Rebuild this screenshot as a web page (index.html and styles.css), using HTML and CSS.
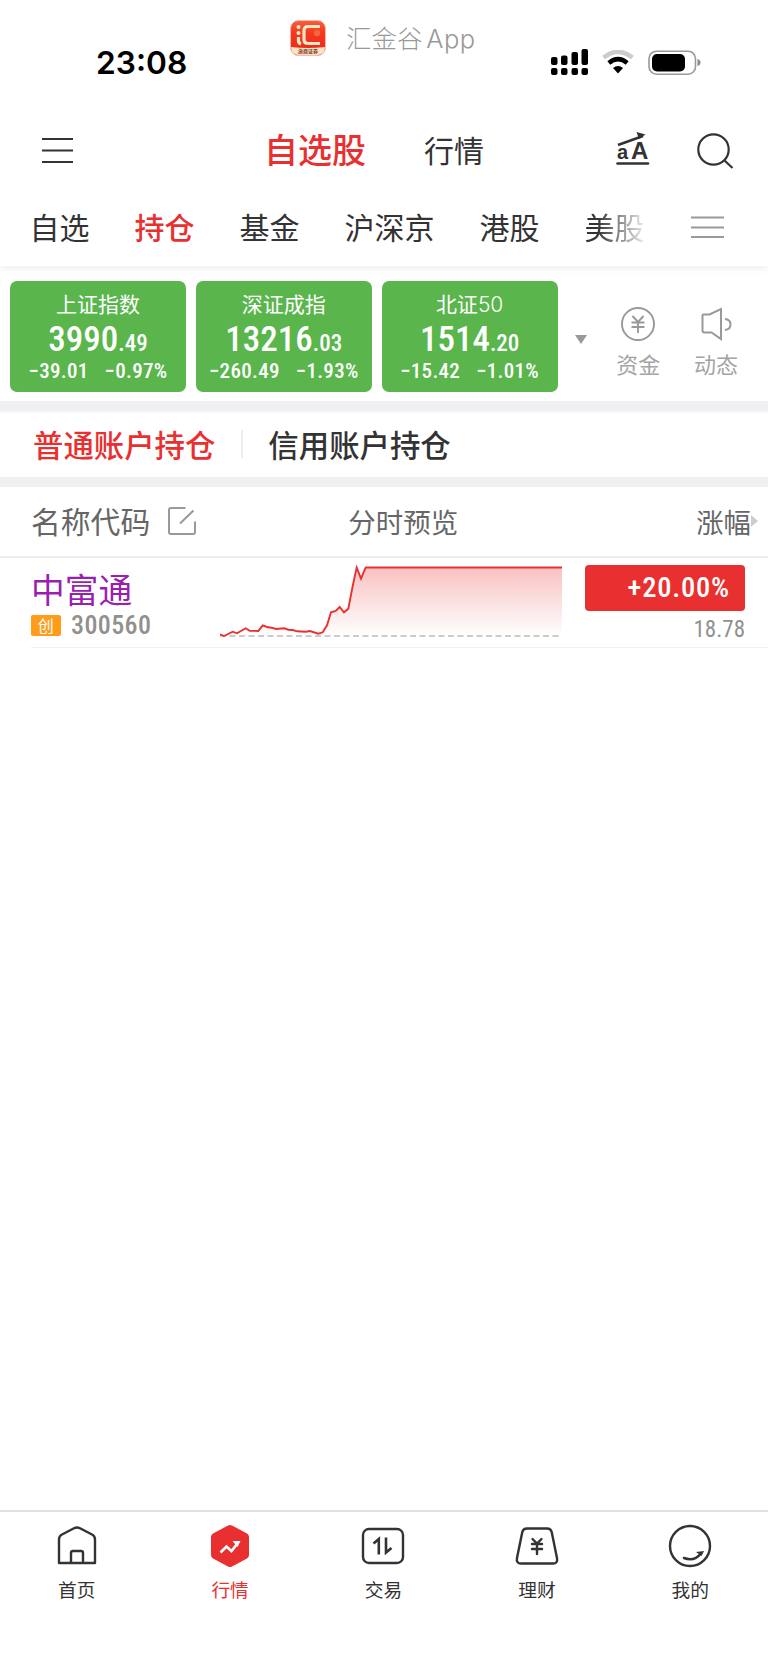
FILE: index.html
```html
<!DOCTYPE html>
<html lang="zh-CN">
  <head>
    <meta charset="UTF-8" />
    <meta name="viewport" content="width=device-width, initial-scale=1.0" />
    <title>自选股</title>
    <link rel="stylesheet" href="styles.css">
  </head>
  <body>
    <div class="app">
      <div class="status-bar">
        <span class="time">23:08</span>
        <div class="app-mark">
          <svg class="logo" width="36" height="36" viewBox="0 0 36 36">
            <defs>
              <linearGradient id="logo-red" x1="0" y1="0" x2="0" y2="1">
                <stop offset="0" stop-color="#f4603f" />
                <stop offset="0.35" stop-color="#f33a20" />
                <stop offset="1" stop-color="#e8251a" />
              </linearGradient>
            </defs>
            <rect x="0.5" y="0.5" width="35" height="35" rx="8" fill="url(#logo-red)" stroke="#f9b9a6" />
            <path d="M1 27 Q18 29 35 27 Q35 35 27 35 H9 Q1 35 1 27Z" fill="#fbe3c8" />
            <path d="M30 6.5 H18 Q14 6.5 14 10.500 V19.500 Q14 23.500 18 23.500 H30" fill="none" stroke="#fce6c4" stroke-width="3.200" />
            <circle cx="8.500" cy="7" r="2" fill="#fce6c4" />
            <circle cx="8.500" cy="13" r="2" fill="#fce6c4" />
            <path d="M8.500 17 V21 Q8.500 23 11 24" fill="none" stroke="#fce6c4" stroke-width="3.200" />
            <circle cx="27" cy="13" r="3.200" fill="#f5643f" />
            <text class="logo-text" x="18" y="33" text-anchor="middle">浙商证券</text>
          </svg>
          <span>汇金谷 <em>App</em></span>
        </div>
        <svg class="signal" width="38" height="28" viewBox="0 0 38 28">
          <rect x="0" y="8" width="6.500" height="8" rx="2" />
          <rect x="10" y="6.500" width="6.500" height="9.500" rx="2" />
          <rect x="20.500" y="3" width="6.500" height="13" rx="2" />
          <rect x="30.500" y="0" width="6.500" height="16" rx="2" />
          <rect x="0" y="19" width="6.500" height="7" rx="2" />
          <rect x="10" y="19" width="6.500" height="7" rx="2" />
          <rect x="20.500" y="19" width="6.500" height="7" rx="2" />
          <rect x="30.500" y="19" width="6.500" height="7" rx="2" />
        </svg>
        <svg class="wifi" width="32" height="24" viewBox="0 0 32 24">
          <path d="M1.500 7.500 Q16 -3.800 30.500 7.500" fill="none" stroke="#ccc" stroke-width="4.500" />
          <path d="M6.800 13 Q16 5.400 25.200 13" fill="none" stroke="#000" stroke-width="4.500" />
          <path d="M11 18 Q16 14 21 18 L16 23.500Z" fill="#000" />
        </svg>
        <svg class="battery" width="53" height="26" viewBox="0 0 53 26">
          <rect x="1" y="1.200" width="46.500" height="23" rx="7.500" fill="none" stroke="#999" stroke-width="1.600" />
          <rect x="4" y="4" width="33" height="17.500" rx="5" />
          <path d="M49.500 9 Q52.500 10 52.500 12.500 Q52.500 15 49.500 16Z" fill="#888" />
        </svg>
      </div>

      <header class="header">
        <svg class="menu" width="31" height="26" viewBox="0 0 31 26" stroke="#333" stroke-width="2">
          <path d="M0 1 H31 M0 12.500 H31 M0 24 H31" />
        </svg>
        <div class="switch">
          <span class="switch-item on">自选股</span>
          <span class="switch-item">行情</span>
        </div>
        <svg class="font-size" width="34" height="34" viewBox="0 0 34 34">
          <text class="small-a" x="1" y="27">a</text>
          <text class="big-a" x="15" y="27">A</text>
          <path d="M2 13 L27 4" stroke="#333" stroke-width="2.600" />
          <path d="M20.500 0 L29.500 2.500 L23 7Z" fill="#333" />
          <path d="M1.500 31.500 H32" stroke="#333" stroke-width="2.600" stroke-linecap="round" />
        </svg>
        <svg class="search" width="37" height="37" viewBox="0 0 37 37" fill="none" stroke="#333" stroke-width="2.200">
          <circle cx="16.500" cy="16.500" r="15.200" />
          <path d="M27 27 L35.500 35" />
        </svg>
      </header>

      <nav class="tabs">
        <span>自选</span>
        <span class="on">持仓</span>
        <span>基金</span>
        <span>沪深京</span>
        <span>港股</span>
        <span class="fade">美股</span>
        <svg width="33" height="23" viewBox="0 0 33 23" stroke="#999" stroke-width="2.200">
          <path d="M0 1.500 H33 M0 11.500 H33 M0 21 H33" />
        </svg>
      </nav>

      <section class="indexes">
        <div class="card">
          <div class="card-name">上证指数</div>
          <div class="card-price">3990<small>.49</small></div>
          <div class="card-change"><span>−39.01</span><span>−0.97%</span></div>
        </div>
        <div class="card">
          <div class="card-name">深证成指</div>
          <div class="card-price">13216<small>.03</small></div>
          <div class="card-change"><span>−260.49</span><span>−1.93%</span></div>
        </div>
        <div class="card">
          <div class="card-name">北证<em>50</em></div>
          <div class="card-price">1514<small>.20</small></div>
          <div class="card-change"><span>−15.42</span><span>−1.01%</span></div>
        </div>
        <i class="arrow-down"></i>
        <div class="tool">
          <svg width="34" height="34" viewBox="0 0 34 34" fill="none" stroke="#999" stroke-width="1.900">
            <circle cx="17" cy="17" r="16" />
            <path d="M11.500 9 L17 15 L22.500 9 M10.500 15.500 H23.500 M10.500 20 H23.500 M17 15 V26" />
          </svg>
          <span>资金</span>
        </div>
        <div class="tool">
          <svg width="34" height="34" viewBox="0 0 34 34" fill="none" stroke="#999" stroke-width="2">
            <path d="M3.500 8.500 Q3.500 7.500 4.500 7.500 H10.500 L22 2 V32 L12.500 25.500 H5.500 Q3.500 25.500 3.500 23.500Z" />
            <path d="M26 12 Q31.500 12.500 31.500 17.500 Q31.500 22.500 26 23" />
          </svg>
          <span>动态</span>
        </div>
      </section>

      <section class="accounts">
        <span class="on">普通账户持仓</span>
        <span>信用账户持仓</span>
      </section>

      <div class="table-head">
        <span class="col-name">名称代码</span>
        <svg width="28" height="28" viewBox="0 0 28 28" fill="none" stroke="#999" stroke-width="2">
          <path d="M17.500 1 H3 Q1 1 1 3 V25 Q1 27 3 27 H25 Q27 27 27 25 V14.500" />
          <path d="M12 16.500 L25.500 3.500" />
        </svg>
        <span class="col-chart">分时预览</span>
        <span class="col-change">涨幅</span>
        <i class="arrow-right"></i>
      </div>

      <div class="stock">
        <div class="stock-info">
          <div class="stock-name">中富通</div>
          <div class="stock-code"><b>创</b><span>300560</span></div>
        </div>
        <svg class="chart" width="342" height="76" viewBox="0 0 342 76">
          <defs>
            <linearGradient id="area" x1="0" y1="0" x2="0" y2="1">
              <stop offset="0" stop-color="#e93030" stop-opacity="0.300" />
              <stop offset="1" stop-color="#e93030" stop-opacity="0" />
            </linearGradient>
          </defs>
          <path d="M0 70.300 L4 72 12.700 67.700 17 69.300 25.700 64.300 29.700 66.700 38.300 67 42.700 61.300 47 63 51.700 63.700 56 65 64.300 64.300 68.300 65.700 72.700 66 77.300 67.300 85.700 67.700 90 67 98.300 69.700 102.700 68.300 107 61.300 111 48.300 115.700 47 119.700 43 124 48.300 128.300 44.700 132.700 22 136.700 3.500 141 14.700 145.700 3.500 342 3.500 V72 H0Z" fill="url(#area)" />
          <path d="M0 72 H342" stroke="#bbb" stroke-width="1.500" stroke-dasharray="6 3.500" />
          <path d="M0 70.300 L4 72 12.700 67.700 17 69.300 25.700 64.300 29.700 66.700 38.300 67 42.700 61.300 47 63 51.700 63.700 56 65 64.300 64.300 68.300 65.700 72.700 66 77.300 67.300 85.700 67.700 90 67 98.300 69.700 102.700 68.300 107 61.300 111 48.300 115.700 47 119.700 43 124 48.300 128.300 44.700 132.700 22 136.700 3.500 141 14.700 145.700 3.500 342 3.500" fill="none" stroke="#e93030" stroke-width="1.900" />
        </svg>
        <div class="stock-quote">
          <div class="percent">+20.00%</div>
          <div class="price">18.78</div>
        </div>
      </div>

      <nav class="bottom-nav">
        <div class="nav-item">
          <svg width="44" height="44" viewBox="0 0 44 44" fill="none" stroke="#333" stroke-width="2.400" stroke-linejoin="round">
            <path d="M4 39 V15.500 Q4 12 7 10.500 L19 4.300 Q22 2.700 25 4.300 L37 10.500 Q40 12 40 15.500 V39Z" />
            <path d="M16 38.500 V29 Q16 27 18 27 H26 Q28 27 28 29 V38.500" />
          </svg>
          <span>首页</span>
        </div>
        <div class="nav-item on">
          <svg width="44" height="44" viewBox="0 0 44 44">
            <path d="M20 1.600 Q22 0.500 24 1.600 L39 9.500 Q41 10.800 41 13 V31 Q41 33.200 39 34.500 L24 42.400 Q22 43.500 20 42.400 L5 34.500 Q3 33.200 3 31 V13 Q3 10.800 5 9.500Z" fill="#e93030" />
            <path d="M12.500 28.500 L18.500 22.500 L23.500 27 L29.500 19.500" fill="none" stroke="#fff" stroke-width="2.600" />
            <path d="M24.500 17 H32.500 L29.500 23Z" fill="#fff" />
          </svg>
          <span>行情</span>
        </div>
        <div class="nav-item">
          <svg width="44" height="44" viewBox="0 0 44 44" fill="none" stroke="#333" stroke-width="2.400">
            <rect x="2" y="5" width="40" height="34" rx="6" />
            <path d="M12.500 19.500 L17.800 15 V30.500 M25 13.500 V28.500 L30.500 24" stroke-width="2.600" />
          </svg>
          <span>交易</span>
        </div>
        <div class="nav-item">
          <svg width="44" height="44" viewBox="0 0 44 44" fill="none" stroke="#333" stroke-width="2.400" stroke-linecap="round">
            <path d="M12 4.500 H32 Q36 4.500 36.800 8.500 L42 34 Q43 39.500 38 39.500 H6 Q1 39.500 2 34 L7.200 8.500 Q8 4.500 12 4.500Z" />
            <path d="M17.500 15 L22 19.500 L26.500 15 M17 20 H27 M17 25 H27 M22 19.500 V30" stroke-width="2.400" />
          </svg>
          <span>理财</span>
        </div>
        <div class="nav-item">
          <svg width="44" height="44" viewBox="0 0 44 44" fill="none" stroke="#333" stroke-width="2.400">
            <circle cx="22" cy="22" r="20" />
            <path d="M16 34 Q26 38 33 29.500" stroke-width="2.600" stroke-linecap="round" />
            <path d="M28 28 L36 27 L33.500 32Z" fill="#333" stroke="none" />
          </svg>
          <span>我的</span>
        </div>
      </nav>
    </div>
  </body>
</html>
```

FILE: styles.css
```css
*,
*::before,
*::after {
  margin: 0;
  padding: 0;
  box-sizing: border-box;
}

body {
  font-family: "Noto Sans CJK SC", sans-serif;
  color: #333;
  background-color: #fff;
}

svg {
  display: block;
  flex: none;
}

em {
  font-style: normal;
}

.app {
  display: flex;
  flex-direction: column;
  width: 768px;
  height: 1670px;
  overflow: hidden;
  white-space: nowrap;
}

/* Status bar */
.status-bar {
  display: flex;
  align-items: flex-start;
  height: 112px;
  color: #000;
}

.time {
  width: 194px;
  margin: 43px 0 0 96px;
  font: 600 31.7px/40px Inter, sans-serif;
}

.app-mark {
  display: flex;
  gap: 20px;
  width: 261px;
  margin-top: 20px;
  font-size: 25.5px;
  font-weight: 300;
  line-height: 34px;
  color: #999;
}

.app-mark em {
  margin-left: -2px;
  font-family: Inter, sans-serif;
  font-size: 25.5px;
  letter-spacing: 0.6px;
}

.logo-text {
  font-size: 5px;
  font-weight: 700;
  fill: #7a3a20;
}

.signal {
  margin-top: 49px;
}

.wifi {
  margin: 50px 0 0 13px;
}

.battery {
  margin: 50px 0 0 14px;
}

/* Header */
.header {
  display: flex;
  align-items: center;
  height: 78px;
}

.menu {
  margin-left: 42px;
}

.switch {
  display: flex;
  align-items: center;
  gap: 58px;
  width: 352px;
  margin-left: 191px;
  padding-bottom: 5px;
}

.switch-item {
  font-size: 30px;
}

.switch-item.on {
  font-size: 34px;
  font-weight: 500;
}

.font-size {
  margin-bottom: 5px;
}

.small-a {
  font: 700 20px "Liberation Sans", sans-serif;
  fill: #333;
}

.big-a {
  font: 700 24px "Liberation Sans", sans-serif;
  fill: #333;
}

.search {
  margin-left: 47px;
}

.on {
  color: #e93030;
}

/* Tabs */
.tabs {
  display: flex;
  align-items: center;
  gap: 45px;
  height: 76px;
  padding: 0 0 4px 29.6px;
  font-size: 30px;
  box-shadow: 0 2px 8px rgba(0, 0, 0, 0.08);
  clip-path: inset(0 0 -12px 0);
}

.tabs .on {
  font-weight: 500;
}

.fade {
  background: linear-gradient(to right, #333 20%, #eee);
  -webkit-background-clip: text;
  background-clip: text;
  color: transparent;
}

.tabs svg {
  margin: 2px 0 0 1px;
}

/* Indexes */
.indexes {
  display: flex;
  align-items: flex-start;
  gap: 9.8px;
  height: 135px;
  padding: 15px 0 0 10px;
}

.card {
  width: 176px;
  height: 111px;
  padding-top: 8px;
  border-radius: 7px;
  text-align: center;
  color: #fff;
  background-color: #5ab64c;
}

.card-name {
  height: 30px;
  font-size: 21px;
  line-height: 29px;
}

.card-name em {
  font-family: Inter, sans-serif;
  font-weight: 300;
}

.card-price {
  height: 40px;
  font: 500 35px/42px Roboto, sans-serif;
  font-stretch: 87%;
}

.card-price small {
  font-size: 23px;
}

.card-change {
  display: flex;
  justify-content: center;
  gap: 16px;
  font: 500 21px/24px Roboto, sans-serif;
  font-stretch: 87%;
  letter-spacing: 0.3px;
}

.arrow-down {
  margin: 54px 7px 0 8px;
  border: solid transparent;
  border-width: 9px 6.5px 0;
  border-top-color: #999;
}

.tool {
  display: flex;
  flex-direction: column;
  align-items: center;
  gap: 7px;
  width: 68px;
  padding-top: 26px;
  font-size: 22px;
  line-height: 30px;
  color: #a5a5a5;
}

/* Account switch */
.accounts {
  display: flex;
  align-items: center;
  height: 86px;
  padding-left: 33px;
  border-top: 10px solid #f0f0f2;
  border-bottom: 10px solid #f0f0f2;
  font-size: 30.4px;
  font-weight: 500;
  box-shadow: inset 0 2px #f8f8f8;
}

.accounts .on {
  padding-right: 28px;
  margin-right: 25px;
  background: linear-gradient(#eee, #eee) right center / 2px 28px no-repeat;
}

/* Stock table */
.table-head {
  display: flex;
  align-items: center;
  height: 71px;
  padding: 0 0 2px 31px;
  border-bottom: 2px solid #ededed;
  color: #666;
}

.col-name {
  margin-right: 18px;
  padding-bottom: 2px;
  font-size: 29.8px;
}

.col-chart {
  width: 348px;
  margin-left: 152px;
  font-size: 27.5px;
}

.col-change {
  font-size: 27.3px;
}

.arrow-right {
  border: solid transparent;
  border-width: 6px 0 6px 7px;
  border-left-color: #ccc;
}

.stock {
  display: flex;
  height: 90px;
  margin-left: 31px;
  border-bottom: 1px solid #f0f0f0;
}

.stock-info {
  width: 189px;
  padding-top: 10px;
}

.stock-name {
  font-size: 33.7px;
  line-height: 42px;
  color: #9a1fb0;
}

.stock-code {
  display: flex;
  align-items: center;
  gap: 10px;
  height: 30px;
  font: 500 26px/30px Roboto, sans-serif;
  font-stretch: 87%;
  letter-spacing: 0.4px;
  color: #909090;
}

.stock-code b {
  width: 30px;
  height: 21px;
  border-radius: 2px;
  font: 400 16px/20px "Noto Sans CJK SC", sans-serif;
  text-align: center;
  color: #fff;
  background-color: #ff9c1a;
}

.chart {
  margin-top: 6px;
}

.stock-quote {
  width: 160px;
  margin: 7px 0 0 23px;
  text-align: right;
  font-family: Roboto, sans-serif;
  font-stretch: 87%;
}

.percent {
  height: 46px;
  padding-right: 15px;
  border-radius: 4px;
  font-size: 28.5px;
  font-weight: 500;
  line-height: 45px;
  letter-spacing: 0.8px;
  color: #fff;
  background-color: #e93030;
}

.price {
  font-size: 23px;
  line-height: 37px;
  color: #909090;
}

/* Bottom navigation */
.bottom-nav {
  display: grid;
  grid-template-columns: repeat(5, 1fr);
  height: 160px;
  margin-top: auto;
  padding: 12px 1px 0 0;
  border-top: 2px solid #e2e2e2;
}

.nav-item {
  display: flex;
  flex-direction: column;
  align-items: center;
  gap: 7px;
  font-size: 18.7px;
  line-height: 28px;
}
```
